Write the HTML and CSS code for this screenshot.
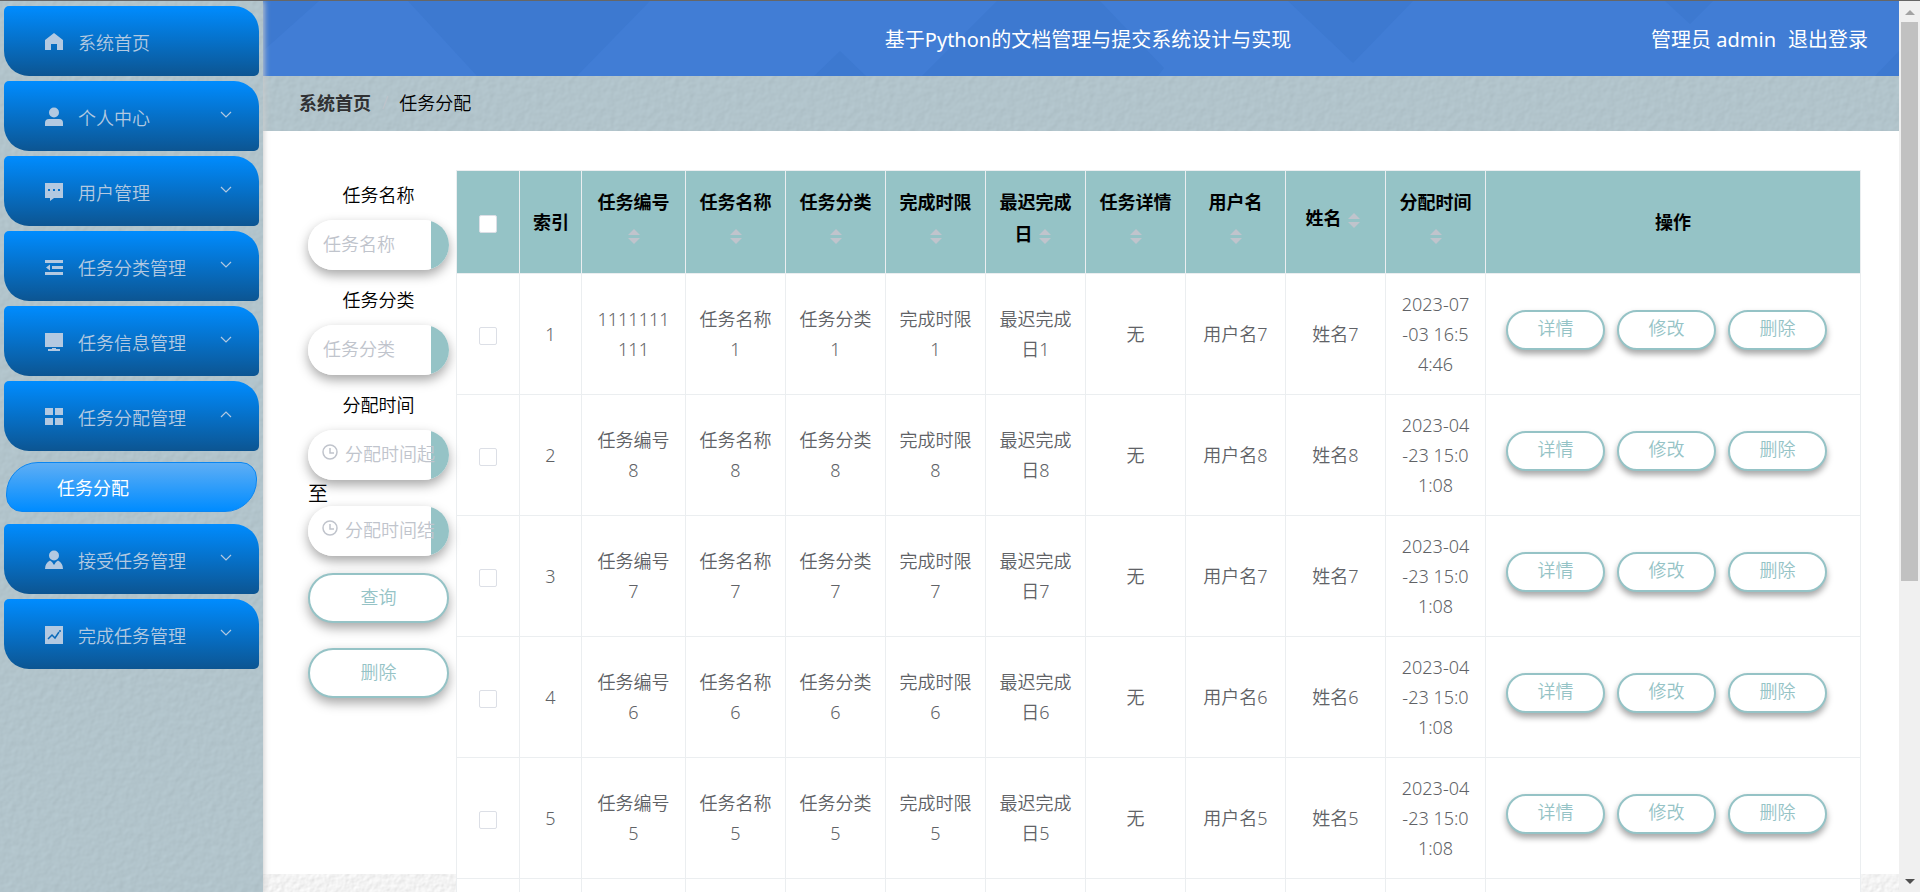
FILE: index.html
```html
<!DOCTYPE html>
<html lang="zh-CN">
	<head>
		<meta charset="UTF-8">
		<title>基于Python的文档管理与提交系统设计与实现</title>
		<link rel="stylesheet" href="styles.css">
		<script>
			window.onload = function() {
				const list = document.querySelector('.tbody')
				const arr = [
					{ code: '1111111111', n: 1, user: 7, time: '2023-07-03 16:54:46' },
					{ code: '任务编号8', n: 8, user: 8, time: '2023-04-23 15:01:08' },
					{ code: '任务编号7', n: 7, user: 7, time: '2023-04-23 15:01:08' },
					{ code: '任务编号6', n: 6, user: 6, time: '2023-04-23 15:01:08' },
					{ code: '任务编号5', n: 5, user: 5, time: '2023-04-23 15:01:08' }
				]

				const trArr = arr.map(function(ele, index) {
					return `
						<tr>
							<td><input type="checkbox" class="check" aria-label="选择${index + 1}"></td>
							<td>${index + 1}</td>
							<td>${ele.code}</td>
							<td>任务名称${ele.n}</td>
							<td>任务分类${ele.n}</td>
							<td>完成时限${ele.n}</td>
							<td>最迟完成日${ele.n}</td>
							<td>无</td>
							<td>用户名${ele.user}</td>
							<td>姓名${ele.user}</td>
							<td>${ele.time}</td>
							<td>
								<div class="ops">
									<button type="button" class="btn small">详情</button>
									<button type="button" class="btn small">修改</button>
									<button type="button" class="btn small">删除</button>
								</div>
							</td>
						</tr>
					`
				})

				// 末尾空行
				trArr.push('<tr>' + '<td></td>'.repeat(12) + '</tr>')

				list.innerHTML = trArr.join('')
			}
		</script>
	</head>
	<body>
		<div class="page">
			<nav class="sidebar">
				<a href="#" class="item">
					<svg class="icon" viewBox="0 0 18 18"><path d="M9 0 18 7V17H12V11H6V17H0V7Z"/></svg>
					<span>系统首页</span>
				</a>
				<a href="#" class="item">
					<svg class="icon" viewBox="0 0 18 18"><circle cx="9" cy="4.500" r="5"/><path d="M0 18V15Q0 11 4 11H14Q18 11 18 15V18Z"/></svg>
					<span>个人中心</span>
					<svg class="arrow" viewBox="0 0 12 7"><path d="M1 1 6 6 11 1"/></svg>
				</a>
				<a href="#" class="item">
					<svg class="icon" viewBox="0 0 18 18"><path fill-rule="evenodd" d="M0 0H18V15H9L5 18V15H0ZM3 6V8H5V6ZM8 6V8H10V6ZM13 6V8H15V6Z"/></svg>
					<span>用户管理</span>
					<svg class="arrow" viewBox="0 0 12 7"><path d="M1 1 6 6 11 1"/></svg>
				</a>
				<a href="#" class="item">
					<svg class="icon" viewBox="0 0 18 18"><path d="M0 2H18V5H0ZM7 8H18V11H7ZM0 14H18V17H0ZM1 9.500 5 6.500V12.500Z"/></svg>
					<span>任务分类管理</span>
					<svg class="arrow" viewBox="0 0 12 7"><path d="M1 1 6 6 11 1"/></svg>
				</a>
				<a href="#" class="item">
					<svg class="icon" viewBox="0 0 18 18"><path d="M0 0H18V14H0ZM7 15H11V16H15V18H3V16H7Z"/></svg>
					<span>任务信息管理</span>
					<svg class="arrow" viewBox="0 0 12 7"><path d="M1 1 6 6 11 1"/></svg>
				</a>
				<a href="#" class="item">
					<svg class="icon" viewBox="0 0 18 18"><path d="M0 0H8V7H0ZM10 0H18V7H10ZM0 10H8V17H0ZM10 10H18V17H10Z"/></svg>
					<span>任务分配管理</span>
					<svg class="arrow" viewBox="0 0 12 7"><path d="M1 6 6 1 11 6"/></svg>
				</a>
				<a href="#" class="sub">任务分配</a>
				<a href="#" class="item">
					<svg class="icon" viewBox="0 0 18 18"><circle cx="9" cy="4.500" r="5"/><path d="M0 18Q0 12 5 9.500L7 11 9 14 11 11 13 9.500Q18 12 18 18Z"/></svg>
					<span>接受任务管理</span>
					<svg class="arrow" viewBox="0 0 12 7"><path d="M1 1 6 6 11 1"/></svg>
				</a>
				<a href="#" class="item">
					<svg class="icon" viewBox="0 0 18 18"><path d="M0 0H18V18H0Z"/><path class="line" d="M3 13 7 9 10 12 14 6"/><circle class="dot" cx="15" cy="5" r="1"/></svg>
					<span>完成任务管理</span>
					<svg class="arrow" viewBox="0 0 12 7"><path d="M1 1 6 6 11 1"/></svg>
				</a>
			</nav>

			<div class="main">
				<header class="header">
					<svg class="header-bg" viewBox="0 0 1636 75" preserveAspectRatio="none">
						<path d="M0 0H56L0 50ZM56 0H145L214 75H314L387 0ZM734 0H837L901 67 895 75H659ZM1025 0 1090 62 1150 0ZM1402 0 1427 23 1450 0ZM577 50 551 75H603ZM1636 50 1612 75H1636Z"/>
					</svg>
					<h1 class="title">基于Python的文档管理与提交系统设计与实现</h1>
					<div class="user">
						<span>管理员 admin</span>
						<a href="#">退出登录</a>
					</div>
				</header>

				<div class="crumb">
					<a href="#">系统首页</a>
					<span class="sep">/</span>
					<span>任务分配</span>
				</div>

				<div class="content">
					<form action="#" class="search">
						<label for="name">任务名称</label>
						<input type="text" id="name" class="field" placeholder="任务名称">
						<label for="type">任务分类</label>
						<input type="text" id="type" class="field" placeholder="任务分类">
						<label for="start">分配时间</label>
						<div class="date">
							<svg class="clock" viewBox="0 0 16 16"><circle cx="8" cy="8" r="7"/><path d="M8 4V9H12"/></svg>
							<input type="text" id="start" class="field" placeholder="分配时间起始">
						</div>
						<label for="end" class="to">至</label>
						<div class="date">
							<svg class="clock" viewBox="0 0 16 16"><circle cx="8" cy="8" r="7"/><path d="M8 4V9H12"/></svg>
							<input type="text" id="end" class="field" placeholder="分配时间结束">
						</div>
						<button type="submit" class="btn">查询</button>
						<button type="button" class="btn">删除</button>
					</form>

					<table>
						<colgroup>
							<col class="w-check">
							<col class="w-index">
							<col class="w-code">
							<col class="w-text" span="8">
							<col>
						</colgroup>
						<thead>
							<tr>
								<th><input type="checkbox" class="check" aria-label="全选"></th>
								<th class="plain">索引</th>
								<th>任务编号<span class="sort"></span></th>
								<th>任务名称<span class="sort"></span></th>
								<th>任务分类<span class="sort"></span></th>
								<th>完成时限<span class="sort"></span></th>
								<th>最迟完成日<span class="sort"></span></th>
								<th>任务详情<span class="sort"></span></th>
								<th>用户名<span class="sort"></span></th>
								<th>姓名<span class="sort"></span></th>
								<th>分配时间<span class="sort"></span></th>
								<th class="plain">操作</th>
							</tr>
						</thead>
						<tbody class="tbody">
						</tbody>
					</table>
				</div>
			</div>

			<div class="scroll">
				<span class="up"></span>
				<span class="thumb"></span>
				<span class="down"></span>
			</div>
		</div>
	</body>
</html>
```
FILE: styles.css
```css
* {
	box-sizing: border-box;
}
body {
	margin: 0;
	font-family: "Noto Sans", "Noto Sans CJK SC", sans-serif;
	font-size: 18px;
	font-weight: 350;
	color: #000;
}
a {
	color: inherit;
	text-decoration: none;
}
input,button {
	font: inherit;
}
.page {
	display: flex;
	height: 100vh;
	overflow: hidden;
	border-top: 1px solid #666;
}

/* 左侧菜单 */
.sidebar,.crumb {
	background-color: #b2c4cb;
	background-image: url("data:image/svg+xml,%3Csvg xmlns='http://www.w3.org/2000/svg' width='200' height='200'%3E%3Cfilter id='a' x='0' y='0' width='100%25' height='100%25' color-interpolation-filters='sRGB'%3E%3CfeTurbulence type='fractalNoise' baseFrequency='.14' numOctaves='2' stitchTiles='stitch'/%3E%3CfeDiffuseLighting surfaceScale='.2' lighting-color='%23c4d8e0'%3E%3CfeDistantLight azimuth='225' elevation='65'/%3E%3C/feDiffuseLighting%3E%3C/filter%3E%3Crect width='200' height='200' filter='url(%23a)'/%3E%3C/svg%3E");
}
.sidebar {
	flex: none;
	position: relative;
	z-index: 1;
	width: 263px;
	padding: 5px 4px;
	box-shadow: 1px 0 6px #ccc;
}
.item {
	display: flex;
	align-items: center;
	gap: 15px;
	height: 70px;
	margin-bottom: 5px;
	padding: 2px 27px 0 41px;
	border-radius: 5px 25px 5px 25px;
	background: linear-gradient(#008cff, #0c5592);
	color: #b3c9e1;
}
.icon {
	width: 18px;
	height: 18px;
	fill: #b3c9e1;
	overflow: visible;
}
.icon .line {
	fill: none;
	stroke: #0a69b9;
	stroke-width: 1.5;
}
.icon .dot {
	fill: #0a69b9;
}
.arrow {
	width: 12px;
	height: 7px;
	margin: 0 0 6px auto;
	fill: none;
	stroke: #b3c9e1;
	stroke-width: 1.2;
}
.sub {
	display: block;
	height: 50px;
	margin: 11px 2px 12px;
	padding-left: 50px;
	border: 1px solid #0a86f2;
	border-radius: 32px 16px 32px 16px;
	background: linear-gradient(#5eaef5, #008cff);
	color: #fff;
	font-weight: 400;
	line-height: 50px;
}

/* 右侧 */
.main {
	flex: 1;
	min-width: 0;
	background-color: #f2f3f5;
	background-image: url("data:image/svg+xml,%3Csvg xmlns='http://www.w3.org/2000/svg' width='200' height='200'%3E%3Cfilter id='a' x='0' y='0' width='100%25' height='100%25' color-interpolation-filters='sRGB'%3E%3CfeTurbulence type='fractalNoise' baseFrequency='.2' numOctaves='2' stitchTiles='stitch'/%3E%3CfeDiffuseLighting surfaceScale='.3' lighting-color='%23ffffff' diffuseConstant='1.05'%3E%3CfeDistantLight azimuth='225' elevation='65'/%3E%3C/feDiffuseLighting%3E%3C/filter%3E%3Crect width='200' height='200' filter='url(%23a)'/%3E%3C/svg%3E");
}
.header {
	position: relative;
	display: grid;
	grid-template-columns: 1fr auto 1fr;
	align-items: center;
	height: 75px;
	padding: 0 31px 0 45px;
	background: #417dd5;
	color: #fff;
	font-size: 20px;
	font-weight: 400;
}
.header-bg {
	position: absolute;
	width: 100%;
	height: 100%;
	fill: #3d79d0;
}
.title {
	position: relative;
	grid-column: 2;
	margin: 0;
	font-size: 20px;
	font-weight: 400;
}
.user {
	position: relative;
	display: flex;
	justify-content: flex-end;
	gap: 12px;
}
.crumb {
	display: flex;
	align-items: center;
	gap: 11px;
	height: 55px;
	padding: 0 36px 3px;
}
.crumb a {
	color: #303133;
	font-weight: 700;
}
.sep {
	color: #c0c4cc;
}
.content {
	display: flex;
	align-items: flex-start;
	gap: 7px;
	height: calc(100vh - 149px);
	padding: 39px 38px 0 45px;
	background: #fff;
}

/* 查询 */
.search {
	display: flex;
	flex: none;
	flex-direction: column;
	width: 141px;
	padding-top: 10px;
}
.search label {
	height: 30px;
	margin-bottom: 10px;
	line-height: 30px;
	text-align: center;
}
.search .to {
	height: 26px;
	margin: -15px 0 0;
	font-size: 20px;
	line-height: 28px;
	text-align: left;
}
.field {
	width: 100%;
	height: 50px;
	margin-bottom: 15px;
	padding: 0 13px 2px 15px;
	border: 0;
	border-radius: 25px;
	background: linear-gradient(to left, #95c3c6 18px, #fff 18px);
	box-shadow: 0 5px 12px rgba(0, 0, 0, .35);
}
.field::placeholder {
	color: #c0c4cc;
}
.date {
	position: relative;
}
.date .field {
	padding-left: 37px;
}
.clock {
	position: absolute;
	top: 14px;
	left: 14px;
	width: 16px;
	height: 16px;
	fill: none;
	stroke: #c0c4cc;
	stroke-width: 1.5;
}
.btn {
	height: 50px;
	margin: 2px 0 23px;
	padding: 0 0 5px;
	border: 2px solid #95c3c6;
	border-radius: 25px;
	background: #fff;
	box-shadow: 0 5px 12px rgba(0, 0, 0, .35);
	color: #95c3c6;
}

/* 表格 */
table {
	flex: 1;
	width: 100%;
	min-width: 0;
	table-layout: fixed;
	border: 1px solid #ebeef0;
	border-right: 0;
	border-bottom: 0;
	border-spacing: 0;
	background: #fff;
}
.w-check {
	width: 63px;
}
.w-index {
	width: 62px;
}
.w-code {
	width: 104px;
}
.w-text {
	width: 100px;
}
td,th {
	padding: 15px 13px;
	border: solid #ebeef0;
	border-width: 0 1px 1px 0;
	line-height: 30px;
	text-align: center;
	word-break: break-all;
}
th {
	height: 103px;
	padding: 15px 13px;
	background: #95c3c6;
	font-weight: 700;
	line-height: 32px;
}
th:has(.sort) {
	padding-bottom: 19px;
}
.plain {
	white-space: nowrap;
}
td {
	height: 121px;
	color: #606266;
}
.sort {
	display: inline-flex;
	flex-direction: column;
	align-items: center;
	justify-content: center;
	gap: 3px;
	width: 24px;
	height: 34px;
	vertical-align: middle;
}
.sort::before,.sort::after {
	content: "";
	border: solid transparent;
	border-width: 0 6px;
}
.sort::before {
	border-bottom: 6px solid #c0c4cc;
}
.sort::after {
	border-top: 6px solid #c0c4cc;
}
.check {
	appearance: none;
	display: inline-block;
	width: 18px;
	height: 18px;
	margin: 0;
	border: 1px solid #dcdfe6;
	border-radius: 2px;
	background: #fff;
	vertical-align: middle;
}
.ops {
	display: flex;
	gap: 12px;
	margin: 0 7px 8px;
}
.small {
	width: 99px;
	height: 40px;
	margin: 0;
	border-radius: 20px;
	box-shadow: 0 4px 6px rgba(0, 0, 0, .35);
}

/* 滚动条 */
.scroll {
	display: flex;
	flex: none;
	flex-direction: column;
	align-items: center;
	width: 21px;
	padding: 9px 0 8px;
	background: #f0f0f0;
}
.up,.down {
	border: solid transparent;
	border-width: 0 5px;
}
.up {
	border-bottom: 5px solid #a3a3a3;
}
.thumb {
	width: 17px;
	height: 64%;
	margin: 7px 0 auto;
	background: #c1c1c1;
}
.down {
	border-top: 5px solid #505050;
}
```
